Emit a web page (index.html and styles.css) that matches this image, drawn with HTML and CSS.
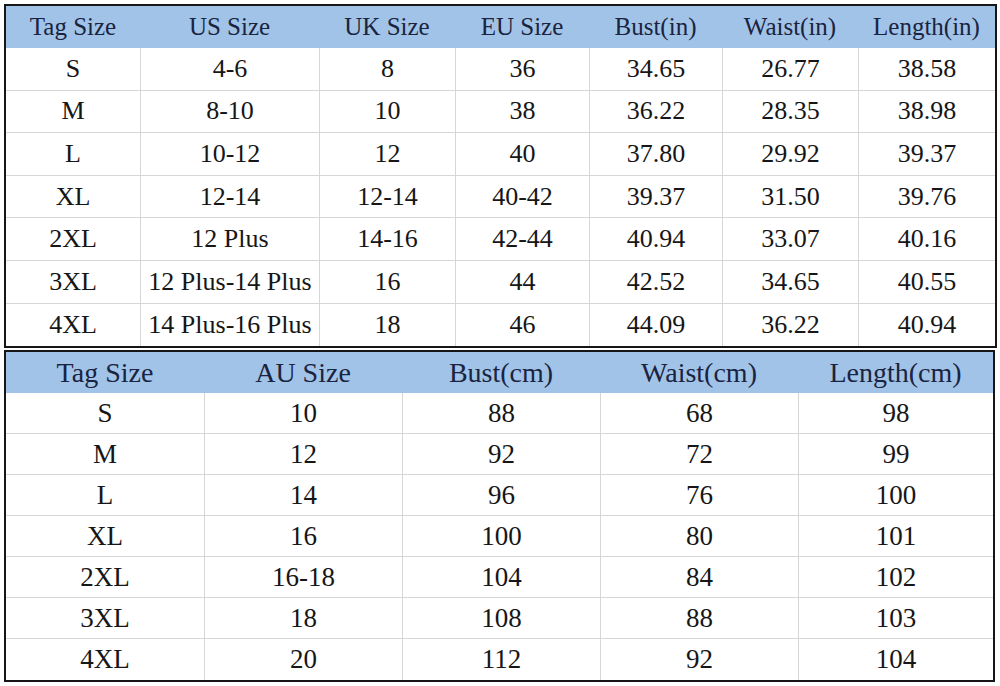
FILE: index.html
```html
<!DOCTYPE html>
<html>
<head>
<meta charset="utf-8">
<link rel="stylesheet" href="styles.css">
</head>
<body>
<div class="page">
  <div class="chart chart-in">
    <div class="row head">
      <div class="cell">Tag Size</div><div class="cell">US Size</div><div class="cell">UK Size</div><div class="cell">EU Size</div><div class="cell">Bust(in)</div><div class="cell">Waist(in)</div><div class="cell">Length(in)</div>
    </div>
    <div class="row"><div class="cell">S</div><div class="cell">4-6</div><div class="cell">8</div><div class="cell">36</div><div class="cell">34.65</div><div class="cell">26.77</div><div class="cell">38.58</div></div>
    <div class="row"><div class="cell">M</div><div class="cell">8-10</div><div class="cell">10</div><div class="cell">38</div><div class="cell">36.22</div><div class="cell">28.35</div><div class="cell">38.98</div></div>
    <div class="row"><div class="cell">L</div><div class="cell">10-12</div><div class="cell">12</div><div class="cell">40</div><div class="cell">37.80</div><div class="cell">29.92</div><div class="cell">39.37</div></div>
    <div class="row"><div class="cell">XL</div><div class="cell">12-14</div><div class="cell">12-14</div><div class="cell">40-42</div><div class="cell">39.37</div><div class="cell">31.50</div><div class="cell">39.76</div></div>
    <div class="row"><div class="cell">2XL</div><div class="cell">12 Plus</div><div class="cell">14-16</div><div class="cell">42-44</div><div class="cell">40.94</div><div class="cell">33.07</div><div class="cell">40.16</div></div>
    <div class="row"><div class="cell">3XL</div><div class="cell">12 Plus-14 Plus</div><div class="cell">16</div><div class="cell">44</div><div class="cell">42.52</div><div class="cell">34.65</div><div class="cell">40.55</div></div>
    <div class="row"><div class="cell">4XL</div><div class="cell">14 Plus-16 Plus</div><div class="cell">18</div><div class="cell">46</div><div class="cell">44.09</div><div class="cell">36.22</div><div class="cell">40.94</div></div>
  </div>
  <div class="chart chart-cm">
    <div class="row head">
      <div class="cell">Tag Size</div><div class="cell">AU Size</div><div class="cell">Bust(cm)</div><div class="cell">Waist(cm)</div><div class="cell">Length(cm)</div>
    </div>
    <div class="row"><div class="cell">S</div><div class="cell">10</div><div class="cell">88</div><div class="cell">68</div><div class="cell">98</div></div>
    <div class="row"><div class="cell">M</div><div class="cell">12</div><div class="cell">92</div><div class="cell">72</div><div class="cell">99</div></div>
    <div class="row"><div class="cell">L</div><div class="cell">14</div><div class="cell">96</div><div class="cell">76</div><div class="cell">100</div></div>
    <div class="row"><div class="cell">XL</div><div class="cell">16</div><div class="cell">100</div><div class="cell">80</div><div class="cell">101</div></div>
    <div class="row"><div class="cell">2XL</div><div class="cell">16-18</div><div class="cell">104</div><div class="cell">84</div><div class="cell">102</div></div>
    <div class="row"><div class="cell">3XL</div><div class="cell">18</div><div class="cell">108</div><div class="cell">88</div><div class="cell">103</div></div>
    <div class="row"><div class="cell">4XL</div><div class="cell">20</div><div class="cell">112</div><div class="cell">92</div><div class="cell">104</div></div>
  </div>
</div>
</body>
</html>
```

FILE: styles.css
```css
* { box-sizing: border-box; }
html, body { margin: 0; padding: 0; background: #ffffff; }
body {
  font-family: "Liberation Serif", "Times New Roman", serif;
  color: #161616;
  width: 1000px;
  height: 686px;
  overflow: hidden;
}
.page {
  padding: 4px 0 0 4px;
  display: flex;
  flex-direction: column;
  gap: 2px;
}
.chart {
  border: 2px solid #161616;
  display: flex;
  flex-direction: column;
}
.row {
  display: grid;
  border-bottom: 1px solid #d6d6d6;
}
.row:last-child { border-bottom: none; }
.cell {
  display: flex;
  align-items: center;
  justify-content: center;
  white-space: nowrap;
  border-left: 1px solid #d6d6d6;
}
.cell:first-child { border-left: none; }
.head {
  background: #a1c3e8;
  color: #1a2340;
  border-bottom: none;
}
.head .cell { border-left: none; }

/* inches chart */
.chart-in { width: 993px; }
.chart-in .row {
  grid-template-columns: 134px 179px 136px 134px 133px 136px 137px;
  height: 42.6px;
  font-size: 26px;
}
.chart-in .head {
  height: 42px;
  font-size: 25px;
}

/* cm chart */
.chart-cm { width: 991px; }
.chart-cm .row {
  grid-template-columns: 198px 198px 198px 198px 195px;
  height: 41px;
  font-size: 27px;
}
.chart-cm .head {
  height: 41px;
  font-size: 28px;
}
```
